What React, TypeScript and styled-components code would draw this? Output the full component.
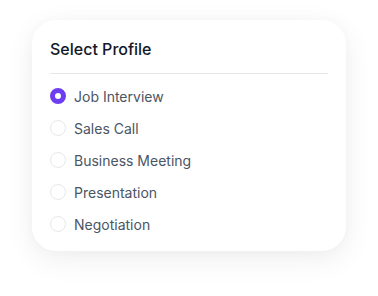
import React, {useState} from 'react';
import styled, {createGlobalStyle} from 'styled-components';

const GlobalStyle = createGlobalStyle`
  body {
    margin: 0;
    background: #ffffff;
    font-family: Inter, "Noto Sans", sans-serif;
  }
`;

const Page = styled.div`
  width: 378px;
  height: 296px;
  padding: 20px 32px 0;
  box-sizing: border-box;
`;

const Card = styled.div`
  width: 314px;
  height: 231px;
  box-sizing: border-box;
  padding: 18px 18px 11px;
  background: #fff;
  border-radius: 24px;
  box-shadow: 0 8px 30px rgba(0, 0, 0, 0.07), 0 0 12px rgba(0, 0, 0, 0.025);
`;

const Title = styled.h2`
  margin: 0;
  font-size: 16px;
  line-height: 23px;
  font-weight: 450;
  color: #111827;
`;

const Divider = styled.hr`
  margin: 12px 0 6px;
  border: none;
  border-top: 1px solid #e5e7eb;
`;

const List = styled.ul`
  list-style: none;
  margin: 0;
  padding: 0;
`;

const Option = styled.li`
  display: flex;
  align-items: center;
  gap: 8px;
  height: 32px;
  font-size: 14px;
  color: #4b5563;
  cursor: pointer;
`;

const Radio = styled.span<{$checked: boolean}>`
  width: 16px;
  height: 16px;
  box-sizing: border-box;
  border-radius: 50%;
  border: ${p => (p.$checked ? '5px solid #6d3ef1' : '1px solid #e5e7eb')};
  background: #fff;
`;

const profiles = ['Job Interview', 'Sales Call', 'Business Meeting', 'Presentation', 'Negotiation'];

function App() {
  const [selected, setSelected] = useState(profiles[0]);
  return (
    <Page>
      <GlobalStyle />
      <Card>
        <Title>Select Profile</Title>
        <Divider />
        <List>
          {profiles.map(p => (
            <Option key={p} onClick={() => setSelected(p)}>
              <Radio $checked={selected === p} />
              {p}
            </Option>
          ))}
        </List>
      </Card>
    </Page>
  );
}

export default App;
